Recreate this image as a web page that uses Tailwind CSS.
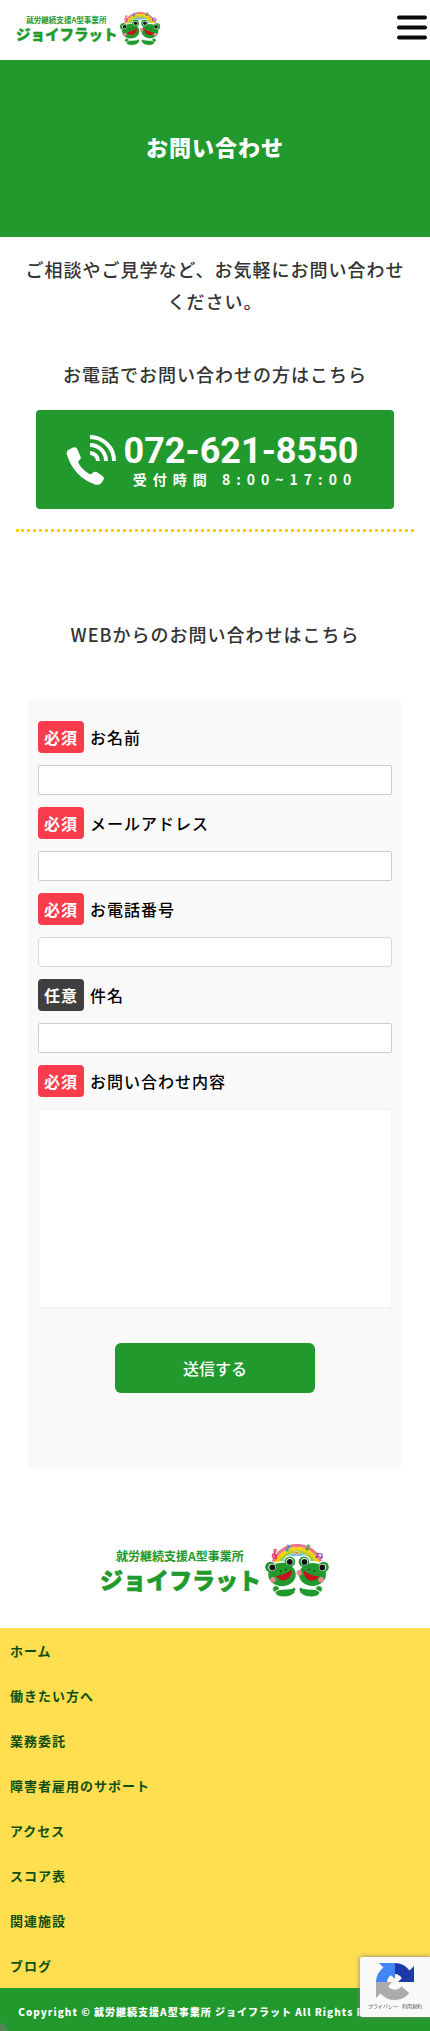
<!DOCTYPE html>
<html lang="ja">
<head>
    <meta charset="UTF-8">
    <meta name="viewport" content="width=device-width, initial-scale=1.0">
    <title>お問い合わせ | ジョイフラット</title>
    <script src="https://cdn.jsdelivr.net/npm/@tailwindcss/browser@4"></script>
</head>
<body class="relative bg-white font-['Noto_Sans_CJK_JP',sans-serif] font-medium text-[#333]">

<!-- Logo, used in the header and the footer -->
<svg class="hidden" aria-hidden="true">
    <symbol id="logo" viewBox="0 0 228 54">
        <g fill="#21992c" font-family="Noto Sans CJK JP, sans-serif">
            <text x="15" y="17" font-size="12" font-weight="700">就労継続支援A型事業所</text>
            <text x="-1" y="45" font-size="23" font-weight="900" stroke="#21992c" stroke-width="0.6" stroke-linejoin="round">ジョイフラット</text>
        </g>
        <!-- Rainbow -->
        <g fill="none" stroke-width="3.2">
            <path d="M170.500 27a25.500 25.500 0 0 1 51 0" stroke="#e8788c"/>
            <path d="M173.500 27a22.500 22.500 0 0 1 45 0" stroke="#fdd000"/>
            <path d="M176.500 27a19.500 19.500 0 0 1 39 0" stroke="#b4cc28"/>
            <path d="M179.500 27a16.500 16.500 0 0 1 33 0" stroke="#5cc4f0"/>
        </g>
        <!-- Notes -->
        <g fill="none" stroke-width="1.200" stroke-linecap="round">
            <path d="M173 6c2-2 3 1 1 2.500s-4 3-2 5 5-1 3-2.500-3 1-1 1M173 7l2.500 8" stroke="#e83468"/>
            <path d="M187 6V1.500l1.500 1.500" stroke="#2890e0"/>
            <path d="M207 5V1l2 1" stroke="#38a838"/>
            <path d="M216.500 13V9.500l4.500 .5v3.500" stroke="#8850b0"/>
        </g>
        <circle cx="186" cy="6" r="1.500" fill="#2890e0"/>
        <circle cx="206" cy="5" r="1.500" fill="#38a838"/>
        <g fill="#8850b0"><circle cx="215.800" cy="13" r="1.300"/><circle cx="220.300" cy="13.500" r="1.300"/></g>
        <path d="M196 11c-5-3-2-5 0-3 2-2 4 .5 0 3z" fill="#f08020" stroke="#fff" stroke-width=".5"/>
        <!-- Right frog -->
        <g fill="#21992c" stroke="#fff" stroke-width="2">
            <circle cx="203" cy="17.700" r="5.500"/><circle cx="222.500" cy="23" r="5.500"/>
            <ellipse cx="211.500" cy="30.500" rx="14.500" ry="12.500"/>
        </g>
        <g fill="#21992c">
            <circle cx="203" cy="17.700" r="5.300"/><circle cx="222.500" cy="23" r="5.300"/>
        </g>
        <!-- Left frog -->
        <g fill="#21992c" stroke="#fff" stroke-width="1.500">
            <circle cx="169.500" cy="23" r="5.500"/><circle cx="188.800" cy="17.700" r="5.500"/>
            <ellipse cx="181" cy="30.500" rx="14.500" ry="12.500"/>
        </g>
        <g fill="#21992c">
            <circle cx="169.500" cy="23" r="5.300"/><circle cx="188.800" cy="17.700" r="5.300"/>
        </g>
        <!-- Arms -->
        <g fill="#21992c" stroke="#fff" stroke-width="1">
            <circle cx="175" cy="45" r="3.500"/><circle cx="218" cy="45" r="3.500"/>
            <path d="M174 48c5-5 13-1 20-5 3 3-1 10-11 10-5 0-9-2-9-5z"/>
            <path d="M219 48c-5-5-13-1-20-5-3 3 1 10 11 10 5 0 9-2 9-5z"/>
            <path d="M194 44l5 4M199 43l-6 5" fill="none"/>
        </g>
        <g fill="#fff">
            <circle cx="171" cy="23.300" r="3.600"/><circle cx="188.800" cy="17.700" r="3.600"/>
            <circle cx="203.500" cy="17.700" r="3.600"/><circle cx="221.500" cy="23.300" r="3.600"/>
        </g>
        <g fill="#111">
            <circle cx="171.300" cy="23.500" r="2.900"/><circle cx="188.800" cy="17.900" r="2.900"/>
            <circle cx="203.500" cy="17.900" r="2.900"/><circle cx="221.300" cy="23.500" r="2.900"/>
            <circle cx="179.500" cy="27" r=".8"/><circle cx="184.800" cy="25.500" r=".8"/>
            <circle cx="208" cy="25.500" r=".8"/><circle cx="213" cy="27" r=".8"/>
        </g>
        <path d="M175 32c6-.5 11-2.500 15.500-6.500 1.500 11-11 14-15.500 6.500zM202.500 26c4 4 9 6 15.500 6.500-4 7-15.500 5-15.500-6.500z" fill="#c8101c"/>
        <g fill="#ec8890">
            <circle cx="172" cy="35.700" r="2.800"/><circle cx="198.300" cy="28.700" r="2.800"/><circle cx="220" cy="35.700" r="2.800"/>
        </g>
    </symbol>
</svg>

<!-- Header -->
<header class="flex h-[60px] items-start justify-between pl-4 pr-[3px]">
    <a href="#" aria-label="ジョイフラット" class="mt-3">
        <svg class="h-[34px] w-[145px]"><use href="#logo"/></svg>
    </a>
    <button type="button" aria-label="メニュー" class="mt-[15px]">
        <svg class="h-[25px] w-[30px]" viewBox="0 0 30 25" fill="#0a0a0a">
            <rect y=".5" width="30" height="4" rx="2"/>
            <rect y="10.500" width="30" height="4" rx="2"/>
            <rect y="20.500" width="30" height="4" rx="2"/>
        </svg>
    </button>
</header>

<main>
    <!-- Page title -->
    <div class="flex h-[177px] items-center justify-center bg-[#21992c] pb-1">
        <h1 class="text-[22px] font-black tracking-[1px] text-white">お問い合わせ</h1>
    </div>

    <!-- Phone -->
    <section class="px-4 pt-4 text-center">
        <p class="text-lg/8 tracking-[1px]">ご相談やご見学など、お気軽にお問い合わせください。</p>
        <p class="mt-[41px] text-lg/8 tracking-[1px]">お電話でお問い合わせの方はこちら</p>
        <a href="tel:072-621-8550" class="mx-5 mt-5 flex h-[99px] items-center justify-center gap-2 rounded bg-[#21992c] pr-[6px] text-white">
            <svg class="h-[50px] w-[50px] shrink-0" viewBox="0 0 50 50">
                <path d="M2 15l5-2.500q3-1 4.500 2l3 7q1 2-1 3.500-1.500 1-1 3 3 6 10 10.500 2 1.500 3.500 0 2-2.500 4.500-1.500l6 4q2.500 2 .5 4.500l-2 3q-2 2-6 1Q8 42 1 20q-1-3 1-5z" fill="#fff"/>
                <g fill="none" stroke="#fff" stroke-width="4">
                    <path d="M24 2a24 24 0 0 1 24 24"/>
                    <path d="M24 10a16 16 0 0 1 16 16"/>
                    <path d="M24 18a8 8 0 0 1 8 8"/>
                </g>
            </svg>
            <span class="flex flex-col items-center">
                <span class="pt-[2px] font-['Roboto',sans-serif] text-4xl/9 font-bold">072-621-8550</span>
                <span class="pl-2 text-sm/5 font-bold tracking-[6px]">受付時間 8:00~17:00</span>
            </span>
        </a>
        <hr class="mt-5 border-0 border-t-3 border-dotted border-[#fdd000]">
    </section>

    <!-- Form -->
    <section class="px-7 pt-[86px]">
        <h2 class="text-center text-lg/8 tracking-[1px]">WEBからのお問い合わせはこちら</h2>
        <form class="mt-[51px] flex flex-col gap-3 bg-[#f9f9f9] px-[10px] pt-5 pb-[74px] tracking-[1px] text-black">
            <label for="name" class="flex items-center gap-[6px] leading-8"><span class="rounded bg-[#f93c4b] px-[6px] font-bold text-white">必須</span>お名前</label>
            <input type="text" id="name" class="h-[30px] w-full rounded-xs border border-[#ccc] bg-white px-2">

            <label for="email" class="flex items-center gap-[6px] leading-8"><span class="rounded bg-[#f93c4b] px-[6px] font-bold text-white">必須</span>メールアドレス</label>
            <input type="email" id="email" class="h-[30px] w-full rounded-xs border border-[#ccc] bg-white px-2">

            <label for="tel" class="flex items-center gap-[6px] leading-8"><span class="rounded bg-[#f93c4b] px-[6px] font-bold text-white">必須</span>お電話番号</label>
            <input type="tel" id="tel" class="h-[30px] w-full rounded border border-[#d8d8d8] bg-white px-2">

            <label for="subject" class="flex items-center gap-[6px] leading-8"><span class="rounded bg-[#3f3f3f] px-[6px] font-bold text-white">任意</span>件名</label>
            <input type="text" id="subject" class="h-[30px] w-full rounded-xs border border-[#ccc] bg-white px-2">

            <label for="message" class="flex items-center gap-[6px] leading-8"><span class="rounded bg-[#f93c4b] px-[6px] font-bold text-white">必須</span>お問い合わせ内容</label>
            <textarea id="message" class="h-[199px] w-full resize-none border border-[#f3f3f3] bg-white p-2"></textarea>

            <button type="submit" class="mx-auto mt-[23px] h-[50px] w-[200px] rounded-md bg-[#21992c] text-base tracking-normal text-white">送信する</button>
        </form>
    </section>
</main>

<!-- Footer -->
<footer class="pt-[77px]">
    <a href="#" aria-label="ジョイフラット" class="mx-auto block w-[228px]">
        <svg class="h-[54px] w-full"><use href="#logo"/></svg>
    </a>
    <nav class="mt-[30px] bg-[#ffde4f] text-[13px]/[23px] font-bold tracking-[1px] text-[#0e4f14]">
        <ul>
            <li><a href="#" class="block px-[10px] py-[11px]">ホーム</a></li>
            <li><a href="#" class="block px-[10px] py-[11px]">働きたい方へ</a></li>
            <li><a href="#" class="block px-[10px] py-[11px]">業務委託</a></li>
            <li><a href="#" class="block px-[10px] py-[11px]">障害者雇用のサポート</a></li>
            <li><a href="#" class="block px-[10px] py-[11px]">アクセス</a></li>
            <li><a href="#" class="block px-[10px] py-[11px]">スコア表</a></li>
            <li><a href="#" class="block px-[10px] py-[11px]">関連施設</a></li>
            <li><a href="#" class="block px-[10px] py-[11px]">ブログ</a></li>
        </ul>
    </nav>
    <div class="relative overflow-hidden bg-[#21992c] pt-4 pb-[11px] text-center">
        <small class="block whitespace-nowrap text-[10px]/4 font-black tracking-[1px] text-white">Copyright © 就労継続支援A型事業所 ジョイフラット All Rights Reserved</small>
        <span class="absolute -bottom-2 -left-2 size-4 rounded-full bg-[#777]/60"></span>
    </div>
</footer>

<!-- reCAPTCHA badge -->
<div class="fixed right-0 bottom-[14px] flex h-[60px] w-[70px] flex-col items-center rounded-l-xs bg-[#f9f9f9] pt-[6px] shadow-[0_0_5px_gray]">
    <svg class="size-[38px]" viewBox="0 0 64 64">
        <path d="M64 32V5l-7.500 7.500A32 32 0 0 0 32 0v18.500a14 14 0 0 1 11.500 7L37 32z" fill="#1c3aa9"/>
        <path d="M32 0H5l7.500 7.500A32 32 0 0 0 0 32h18.500a14 14 0 0 1 7-11.500L32 27z" fill="#4285f4"/>
        <path d="M0 32v27l7.500-7.500A32 32 0 0 0 56 51L43 39a14 14 0 0 1-22.500 0L27 32z" fill="#ababab"/>
    </svg>
    <a href="#" class="whitespace-nowrap text-[5px]/[10px] font-normal text-[#555]">プライバシー - 利用規約</a>
</div>

</body>
</html>
